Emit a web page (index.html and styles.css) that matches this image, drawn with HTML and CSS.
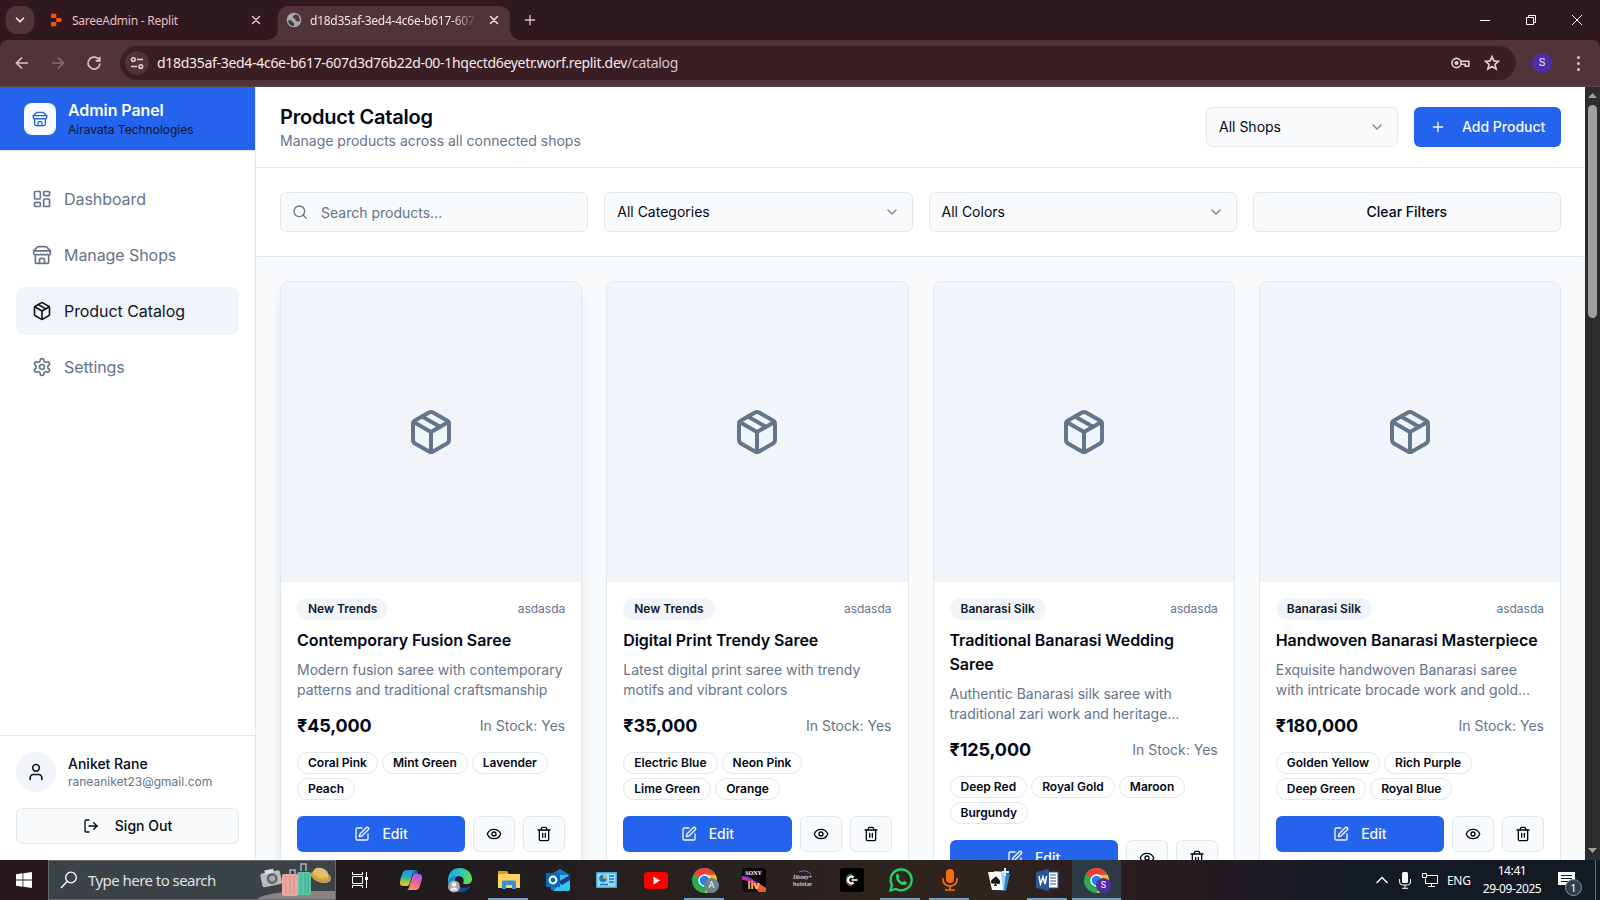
FILE: index.html
```html
<!DOCTYPE html>
<html lang="en">
<head>
<meta charset="utf-8">
<title>Product Catalog</title>
<link rel="stylesheet" href="styles.css">
</head>
<body>
<svg class="defs" aria-hidden="true">
  <linearGradient id="cpa" x1="0" y1="0" x2="0" y2="1"><stop offset="0" stop-color="#1b8fe0"/><stop offset=".45" stop-color="#28b4b0"/><stop offset=".75" stop-color="#a5c93c"/><stop offset="1" stop-color="#f5c623"/></linearGradient>
  <linearGradient id="cpb" x1=".6" y1="0" x2=".3" y2="1"><stop offset="0" stop-color="#a45bea"/><stop offset=".5" stop-color="#e8629a"/><stop offset="1" stop-color="#fb9a52"/></linearGradient>
  <linearGradient id="edg" x1="0" y1="0" x2="1" y2=".3"><stop offset="0" stop-color="#1c9fdc"/><stop offset=".5" stop-color="#2bc3c4"/><stop offset="1" stop-color="#5ddc5b"/></linearGradient>
  <symbol id="chev" viewBox="0 0 24 24"><path d="m6 9 6 6 6-6"/></symbol>
  <symbol id="x" viewBox="0 0 24 24"><path d="M5 5l14 14M19 5L5 19"/></symbol>
  <symbol id="plus" viewBox="0 0 24 24"><path d="M5 12h14M12 5v14"/></symbol>
  <symbol id="store" viewBox="0 0 24 24"><path d="m2 7 4.41-4.41A2 2 0 0 1 7.83 2h8.34a2 2 0 0 1 1.42.59L22 7"/><path d="M4 12v8a2 2 0 0 0 2 2h12a2 2 0 0 0 2-2v-8"/><path d="M15 22v-4a2 2 0 0 0-2-2h-2a2 2 0 0 0-2 2v4"/><path d="M2 7h20"/><path d="M22 7v3a2 2 0 0 1-2 2a2.7 2.7 0 0 1-1.59-.63.7.7 0 0 0-.82 0A2.7 2.7 0 0 1 16 12a2.7 2.7 0 0 1-1.59-.63.7.7 0 0 0-.82 0A2.7 2.7 0 0 1 12 12a2.7 2.7 0 0 1-1.59-.63.7.7 0 0 0-.82 0A2.7 2.7 0 0 1 8 12a2.7 2.7 0 0 1-1.59-.63.7.7 0 0 0-.82 0A2.7 2.7 0 0 1 4 12a2 2 0 0 1-2-2V7"/></symbol>
  <symbol id="dash" viewBox="0 0 24 24"><rect width="7" height="9" x="3" y="3" rx="1"/><rect width="7" height="5" x="14" y="3" rx="1"/><rect width="7" height="9" x="14" y="12" rx="1"/><rect width="7" height="5" x="3" y="16" rx="1"/></symbol>
  <symbol id="box" viewBox="0 0 24 24"><path d="m7.5 4.27 9 5.15"/><path d="M21 8a2 2 0 0 0-1-1.73l-7-4a2 2 0 0 0-2 0l-7 4A2 2 0 0 0 3 8v8a2 2 0 0 0 1 1.73l7 4a2 2 0 0 0 2 0l7-4A2 2 0 0 0 21 16Z"/><path d="m3.3 7 8.7 5 8.7-5"/><path d="M12 22V12"/></symbol>
  <symbol id="gear" viewBox="0 0 24 24"><path d="M12.22 2h-.44a2 2 0 0 0-2 2v.18a2 2 0 0 1-1 1.73l-.43.25a2 2 0 0 1-2 0l-.15-.08a2 2 0 0 0-2.73.73l-.22.38a2 2 0 0 0 .73 2.73l.15.1a2 2 0 0 1 1 1.72v.51a2 2 0 0 1-1 1.74l-.15.09a2 2 0 0 0-.73 2.73l.22.38a2 2 0 0 0 2.73.73l.15-.08a2 2 0 0 1 2 0l.43.25a2 2 0 0 1 1 1.73V20a2 2 0 0 0 2 2h.44a2 2 0 0 0 2-2v-.18a2 2 0 0 1 1-1.73l.43-.25a2 2 0 0 1 2 0l.15.08a2 2 0 0 0 2.73-.73l.22-.39a2 2 0 0 0-.73-2.73l-.15-.08a2 2 0 0 1-1-1.74v-.5a2 2 0 0 1 1-1.74l.15-.09a2 2 0 0 0 .73-2.73l-.22-.38a2 2 0 0 0-2.73-.73l-.15.08a2 2 0 0 1-2 0l-.43-.25a2 2 0 0 1-1-1.73V4a2 2 0 0 0-2-2z"/><circle cx="12" cy="12" r="3"/></symbol>
  <symbol id="user" viewBox="0 0 24 24"><path d="M19 21v-2a4 4 0 0 0-4-4H9a4 4 0 0 0-4 4v2"/><circle cx="12" cy="7" r="4"/></symbol>
  <symbol id="logout" viewBox="0 0 24 24"><path d="M9 21H5a2 2 0 0 1-2-2V5a2 2 0 0 1 2-2h4"/><path d="m16 17 5-5-5-5"/><path d="M21 12H9"/></symbol>
  <symbol id="search" viewBox="0 0 24 24"><circle cx="11" cy="11" r="8"/><path d="m21 21-4.3-4.3"/></symbol>
  <symbol id="pen" viewBox="0 0 24 24"><path d="M12 3H5a2 2 0 0 0-2 2v14a2 2 0 0 0 2 2h14a2 2 0 0 0 2-2v-7"/><path d="M18.375 2.625a1 1 0 0 1 3 3l-9.013 9.014a2 2 0 0 1-.853.505l-2.873.84a.5.5 0 0 1-.62-.62l.84-2.873a2 2 0 0 1 .506-.852z"/></symbol>
  <symbol id="eye" viewBox="0 0 24 24"><path d="M2.062 12.348a1 1 0 0 1 0-.696 10.75 10.75 0 0 1 19.876 0 1 1 0 0 1 0 .696 10.75 10.75 0 0 1-19.876 0"/><circle cx="12" cy="12" r="3"/></symbol>
  <symbol id="trash" viewBox="0 0 24 24"><path d="M3 6h18"/><path d="M19 6v14c0 1-1 2-2 2H7c-1 0-2-1-2-2V6"/><path d="M8 6V4c0-1 1-2 2-2h4c1 0 2 1 2 2v2"/><path d="M10 11v6M14 11v6"/></symbol>
  <symbol id="chrome" viewBox="0 0 24 24"><circle cx="12" cy="12" r="12" fill="#2da94f"/><path d="M12 12 1.6 6A12 12 0 0 1 22.4 6Z" fill="#ea4335"/><path d="M12 6.5H22.6A12 12 0 0 1 12 24l5-9Z" fill="#fbc116"/><circle cx="12" cy="12" r="5.9" fill="#fff"/><circle cx="12" cy="12" r="4.6" fill="#2b7de9"/></symbol>
</svg>

<div class="screen">
  <div class="tabs">
    <div class="tabmenu"><svg class="i s14 w3"><use href="#chev"/></svg></div>
    <div class="tab">
      <svg class="fav" viewBox="0 0 16 16" fill="#fd5402"><rect x="3" y="1.8" width="5.300" height="4.200" rx=".8"/><rect x="8.200" y="5.900" width="5.300" height="4.200" rx=".8"/><rect x="3" y="10" width="5.300" height="4.200" rx=".8"/></svg>
      <span class="tabtext">SareeAdmin - Replit</span>
      <svg class="i s12 w3"><use href="#x"/></svg>
    </div>
    <div class="tab active">
      <svg class="fav" viewBox="0 0 16 16"><circle cx="8" cy="8" r="7.300" fill="#a3a8ad"/><path d="M2.200 8.200c2.300 0 4.300 0 4.300 2.300 1.800 0 1.800 1 1.500 3.500C4.500 14 2 11.500 2.200 8.200ZM9.500 2.200c-.5 1.300-2.500.8-2.500 2.800 0 1.500 1.500 1 2 1.800.8 1.200 0 2 1.500 2.200s1 1 3 .5c1-3-.5-6.500-4-7.300Z" fill="#50343a"/></svg>
      <span class="tabtext fade">d18d35af-3ed4-4c6e-b617-607</span>
      <svg class="i s12 w3"><use href="#x"/></svg>
    </div>
    <svg class="i s16 newtab"><use href="#plus"/></svg>
    <div class="win">
      <svg width="12" height="12"><path d="M1 6.500h10"/></svg>
      <svg width="12" height="12"><path d="M1.500 3.500h7v7h-7zM3.500 3.500v-2h7v7h-2"/></svg>
      <svg width="12" height="12"><path d="M1 1l10 10M11 1L1 11"/></svg>
    </div>
  </div>
  <div class="toolwrap"><div class="toolbar">
    <svg class="nav" viewBox="0 0 16 16"><path d="M14 8H2.500M8 2.500 2.500 8 8 13.500"/></svg>
    <svg class="nav dim" viewBox="0 0 16 16"><path d="M2 8h11.500M8 2.500 13.500 8 8 13.500"/></svg>
    <svg class="nav reload" viewBox="0 0 16 16"><path d="M13.300 5.200A6 6 0 1 0 14 8.500M13.700 1.800v4h-4"/></svg>
    <div class="omni">
      <div class="site"><svg viewBox="0 0 16 16" width="16" height="16"><circle cx="4.300" cy="4.500" r="1.800"/><path d="M8 4.500h6M2 11.500h6"/><circle cx="11.800" cy="11.500" r="1.800"/></svg></div>
      <span class="url">d18d35af-3ed4-4c6e-b617-607d3d76b22d-00-1hqectd6eyetr.worf.replit.dev<span>/catalog</span></span>
      <svg class="key" viewBox="0 0 19 12"><circle cx="5.500" cy="6" r="4.600"/><circle cx="5.500" cy="6" r="1.300" fill="currentColor"/><path d="M9.800 4.200h8v5h-3.600v-2h-4.400"/></svg>
      <svg class="star" viewBox="0 0 16 16"><path d="m8 1.600 1.900 4.300 4.600.4-3.500 3.100 1.100 4.600L8 11.500 3.900 14 5 9.400 1.500 6.300l4.600-.4z"/></svg>
    </div>
    <div class="profile">S</div>
    <div class="dots"><i></i><i></i><i></i></div>
  </div></div>

  <div class="page">
    <aside class="side">
      <div class="brand">
        <div class="logo"><svg class="i s16"><use href="#store"/></svg></div>
        <div><div class="bname">Admin Panel</div><div class="bsub">Airavata Technologies</div></div>
      </div>
      <nav class="menu">
        <a class="item"><svg class="i s20"><use href="#dash"/></svg>Dashboard</a>
        <a class="item"><svg class="i s20"><use href="#store"/></svg>Manage Shops</a>
        <a class="item on"><svg class="i s20"><use href="#box"/></svg>Product Catalog</a>
        <a class="item"><svg class="i s20"><use href="#gear"/></svg>Settings</a>
      </nav>
      <div class="account">
        <div class="who">
          <div class="avatar"><svg class="i s20"><use href="#user"/></svg></div>
          <div><div class="uname">Aniket Rane</div><div class="umail">raneaniket23@gmail.com</div></div>
        </div>
        <div class="btn signout"><svg class="i s16"><use href="#logout"/></svg>Sign Out</div>
      </div>
    </aside>
    <main class="main">
      <header class="head">
        <div><h1>Product Catalog</h1><p>Manage products across all connected shops</p></div>
        <div class="actions">
          <div class="select shops">All Shops<svg class="i s16"><use href="#chev"/></svg></div>
          <div class="add"><svg class="i s16"><use href="#plus"/></svg>Add Product</div>
        </div>
      </header>
      <div class="filters">
        <div class="select find"><svg class="i s16"><use href="#search"/></svg><span>Search products...</span></div>
        <div class="select">All Categories<svg class="i s16"><use href="#chev"/></svg></div>
        <div class="select">All Colors<svg class="i s16"><use href="#chev"/></svg></div>
        <div class="btn clear">Clear Filters</div>
      </div>
      <div class="grid">
        <article class="card hover">
          <div class="pic"><svg class="i s48"><use href="#box"/></svg></div>
          <div class="body">
            <div class="row top"><span class="badge">New Trends</span><span class="shop">asdasda</span></div>
            <h3>Contemporary Fusion Saree</h3>
            <p class="desc">Modern fusion saree with contemporary patterns and traditional craftsmanship</p>
            <div class="row cost"><b>₹45,000</b><span>In Stock: Yes</span></div>
            <div class="chips"><span>Coral Pink</span><span>Mint Green</span><span>Lavender</span><span>Peach</span></div>
            <div class="acts"><div class="edit"><svg class="i s16"><use href="#pen"/></svg>Edit</div><div class="btn sq"><svg class="i s16"><use href="#eye"/></svg></div><div class="btn sq"><svg class="i s16"><use href="#trash"/></svg></div></div>
          </div>
        </article>
        <article class="card">
          <div class="pic"><svg class="i s48"><use href="#box"/></svg></div>
          <div class="body">
            <div class="row top"><span class="badge">New Trends</span><span class="shop">asdasda</span></div>
            <h3>Digital Print Trendy Saree</h3>
            <p class="desc">Latest digital print saree with trendy motifs and vibrant colors</p>
            <div class="row cost"><b>₹35,000</b><span>In Stock: Yes</span></div>
            <div class="chips"><span>Electric Blue</span><span>Neon Pink</span><span>Lime Green</span><span>Orange</span></div>
            <div class="acts"><div class="edit"><svg class="i s16"><use href="#pen"/></svg>Edit</div><div class="btn sq"><svg class="i s16"><use href="#eye"/></svg></div><div class="btn sq"><svg class="i s16"><use href="#trash"/></svg></div></div>
          </div>
        </article>
        <article class="card">
          <div class="pic"><svg class="i s48"><use href="#box"/></svg></div>
          <div class="body">
            <div class="row top"><span class="badge">Banarasi Silk</span><span class="shop">asdasda</span></div>
            <h3>Traditional Banarasi Wedding Saree</h3>
            <p class="desc">Authentic Banarasi silk saree with<br>traditional zari work and heritage…</p>
            <div class="row cost"><b>₹125,000</b><span>In Stock: Yes</span></div>
            <div class="chips"><span>Deep Red</span><span>Royal Gold</span><span>Maroon</span><span>Burgundy</span></div>
            <div class="acts"><div class="edit"><svg class="i s16"><use href="#pen"/></svg>Edit</div><div class="btn sq"><svg class="i s16"><use href="#eye"/></svg></div><div class="btn sq"><svg class="i s16"><use href="#trash"/></svg></div></div>
          </div>
        </article>
        <article class="card">
          <div class="pic"><svg class="i s48"><use href="#box"/></svg></div>
          <div class="body">
            <div class="row top"><span class="badge">Banarasi Silk</span><span class="shop">asdasda</span></div>
            <h3>Handwoven Banarasi Masterpiece</h3>
            <p class="desc">Exquisite handwoven Banarasi saree<br>with intricate brocade work and gold…</p>
            <div class="row cost"><b>₹180,000</b><span>In Stock: Yes</span></div>
            <div class="chips"><span>Golden Yellow</span><span>Rich Purple</span><span>Deep Green</span><span>Royal Blue</span></div>
            <div class="acts"><div class="edit"><svg class="i s16"><use href="#pen"/></svg>Edit</div><div class="btn sq"><svg class="i s16"><use href="#eye"/></svg></div><div class="btn sq"><svg class="i s16"><use href="#trash"/></svg></div></div>
          </div>
        </article>
      </div>
    </main>
    <div class="scroll"><svg width="9" height="5"><path d="M0 5h9L4.500 0z"/></svg><div class="thumb"></div><svg width="9" height="5"><path d="M0 0h9L4.500 5z"/></svg></div>
  </div>

  <div class="taskbar">
    <div class="start"><svg width="16" height="16" fill="#fff"><path d="M0 2.200 6.500 1.300V7.600H0zM7.300 1.200 16 0v7.600H7.300zM0 8.400h6.500v6.300L0 13.800zM7.300 8.400H16V16l-8.700-1.200z"/></svg></div>
    <div class="tsearch">
      <svg width="18" height="18" viewBox="0 0 18 18" fill="none" stroke="#fff" stroke-width="1.300"><circle cx="11" cy="6.500" r="5.300"/><path d="M7 10.500 1 17"/></svg>
      <span>Type here to search</span>
      <svg class="trip" width="78" height="38" viewBox="0 0 78 38">
        <path d="M0 38C14 29 48 30 78 30V38Z" fill="#8b8282"/>
        <g transform="rotate(-12 13 17)"><rect x="4" y="11" width="20" height="14" rx="2" fill="#b9bab9"/><rect x="9" y="8.500" width="9" height="4" fill="#dcdcda"/><circle cx="15" cy="18" r="5.500" fill="#666968"/><circle cx="15" cy="18" r="3" fill="#a6acad"/></g>
        <path d="M33 14V9h5v5M44 10V3h5v7" fill="none" stroke="#aeb2b8" stroke-width="1.500"/>
        <rect x="40" y="11" width="14" height="23" rx="2" fill="#5cc5a5"/><path d="M44 12v20M48 12v20M51 12v20" stroke="#3aa588" stroke-width=".8"/>
        <rect x="25" y="13" width="16" height="22" rx="2" fill="#e9a7a2"/><path d="M29 15v18M33 15v18M37 15v18" stroke="#d08a86" stroke-width=".8"/>
        <ellipse cx="64" cy="15.500" rx="10.500" ry="6" transform="rotate(18 64 15.500)" fill="#c79c57"/><path d="M56 13c0-6 4-7 8-6s8 3 7 9c-5 2-11 1-15-3Z" fill="#e1bd79"/><path d="M56 13c4 4 9 5 15 4" fill="none" stroke="#e7b31c" stroke-width="2"/>
      </svg>
    </div>
    <div class="apps">
      <div class="app first"><svg width="18" height="16" fill="none" stroke="#fff"><path d="M1.500 0v2.500h10V0M1.500 16v-2.500h10V16M1.500 4.500h10v7h-10zM15.500 0v16"/><path d="M14 5h3v3h-3z" fill="#fff" stroke="none"/></svg></div>
      <div class="app"><svg width="24" height="24" viewBox="0 0 24 24"><path d="M14 2h2.500q1.500 0 2 1.500L19.500 7H14Z" fill="#1767be"/><path d="M7.500 2H16q-1.500.5-2.200 3L10.500 16q-.7 2-2.500 2H4C.5 18 .5 14.500 1.500 11l2-6Q4.500 2 7.500 2Z" fill="url(#cpa)"/><path d="M16.500 22H8q1.500-.5 2.200-3L13.500 8q.7-2 2.500-2H20c3.500 0 3.500 3.500 2.500 7l-2 6q-1 3-4 3Z" fill="url(#cpb)"/></svg></div>
      <div class="app"><svg width="26" height="26" viewBox="0 0 26 26"><path d="M1 12C2 4 7 1 13 1c7 0 12 5 12 11 0 5-5 6-9 4.500 2-4 0-7.500-5-7.500C6 9 2 12 1.500 18Q.8 15 1 12Z" fill="url(#edg)"/><path d="M1.300 15C2 11 6 9 11 9c-5 3-4 10 0 13 1 1 3 2.500 5 2.700A12 12 0 0 1 1.300 15Z" fill="#1583d2"/><path d="M9.500 14c0 6 7 8.500 14 5.500-3 4.500-7 5.500-10 5.500-6-2-7-7-4-11Z" fill="#124e96"/><circle cx="7" cy="19.500" r="6" fill="#a8a8a8"/><circle cx="7" cy="17.500" r="2.300" fill="#efefef"/><path d="M3 23.500c1-4 7-4 8 0Z" fill="#efefef"/></svg></div>
      <div class="app open wide"><svg width="22" height="18" viewBox="0 0 22 18"><path d="M0 0h9l2 3H0z" fill="#e2a100"/><path d="M0 3h22v14H0z" fill="#ffd262"/><path d="M4 18v-7q0-1.500 1.500-1.500h11q1.500 0 1.500 1.500v7h-4v-4H8v4z" fill="#3b90d5"/></svg></div>
      <div class="app"><svg width="24" height="24" viewBox="0 0 24 24"><path d="M4 7 14 1l10 6v15H5z" fill="#1476c6"/><path d="M7 7h15v10H7z" fill="#46b8ef"/><path d="M24 8v13q0 2-2 2H7z" fill="#35c5f1"/><path d="m12 14 12-7v5l-8 5z" fill="#123f83"/><rect y="5" width="14" height="14" rx="1" fill="#0a68bd"/><circle cx="7" cy="12" r="3.400" fill="none" stroke="#fff" stroke-width="2"/></svg></div>
      <div class="app"><svg width="21" height="16"><rect width="21" height="16" rx="1" fill="#4aa9dc"/><rect x="1.500" y="1.500" width="18" height="13" fill="#9addf5"/><circle cx="7" cy="6.500" r="3.800" fill="#1f7dbb"/><path d="M7 6.500V2.700a3.800 3.800 0 0 1 3.800 3.800z" fill="#f2b33d"/><path d="M13 4h5M13 7h5M13 10h5M4 12.500h8" stroke="#187bb4" stroke-width="1.500"/></svg></div>
      <div class="app"><svg width="24" height="17"><rect width="24" height="17" rx="4" fill="#f00"/><path d="M9.500 4.500v8l6.500-4z" fill="#fff"/></svg></div>
      <div class="app open"><svg width="25" height="25"><use href="#chrome" width="25" height="25"/></svg><span class="dot gray">A</span></div>
      <div class="app"><div class="sony"><b>SONY</b><svg viewBox="0 0 24 24"><path d="M0 8c10-1 10 5 24 12v4H0Z" fill="#3b42dd"/><path d="M0 9c10 0 12 6 24 12v3H0Z" fill="#d32c83"/><path d="M0 12c8 0 12 5 16 12H0Z" fill="#180820"/><path d="M15 14 24 20v4h-7Z" fill="#f06024"/></svg><i>liv</i></div></div>
      <div class="app"><div class="hot"><svg width="18" height="4" fill="none" stroke="#3b9fae"><path d="M5 2Q12-1 17 4"/></svg><i>Disney+</i><span>hotstar</span></div></div>
      <div class="app"><div class="ctile"><svg width="24" height="24" fill="none"><path d="M13.500 9.500a3.300 3.300 0 1 0 0 5" stroke="#fff" stroke-width="2.400"/><path d="M6.300 11a5.500 5.500 0 0 1 5.200-4.300" stroke="#38a354" stroke-width="1.200"/><path d="M6.300 13a5.500 5.500 0 0 0 5.200 4.300" stroke="#dd5542" stroke-width="1.200"/><path d="M11.500 12h6" stroke="#ccc" stroke-width="2.200"/></svg></div></div>
      <div class="app open"><svg width="24" height="24" viewBox="0 0 24 24"><path d="M1.500 22.500 3 17A10.500 10.500 0 1 1 7 21z" fill="none" stroke="#26d366" stroke-width="2.300"/><path d="M7 8c0-2 2-3 2.800-1.200L10.500 9l-1 1.300c1 2 2.200 3 4.200 3.900l1.300-1.500 2.800 1.500c0 2-1.800 3-3.500 2.800C10 16.500 7 12.500 7 8Z" fill="#26d366"/></svg></div>
      <div class="app open"><svg width="16" height="22" viewBox="0 0 16 22"><rect x="4" width="8" height="14" rx="4" fill="#f96b0b"/><path d="M1 9v2a7 6 0 0 0 14 0V9M8 17v4M3 21h10" fill="none" stroke="#f96b0b" stroke-width="1.700"/></svg></div>
      <div class="app"><svg width="24" height="24" viewBox="0 0 24 24"><path d="m10 3 13 3-4 17-10-1z" fill="#2384cf"/><path d="m7 3 12 1-2 18-8 0z" fill="#9cd5f3"/><path d="m1 4 13 0 2 18-11 0z" fill="#f9fafa"/><path d="M9 8c1 2 5 4 4 7-1 2-3 1-4 0l1 3H7l1-3c-1 1-4 1-4-1 0-3 4-4 5-6Z" fill="#151515"/><path d="M18 0v8M15 4h7" stroke="#dff2ff" stroke-width="2"/></svg></div>
      <div class="app open"><svg width="23" height="22" viewBox="0 0 23 22"><path d="M11 3h11v16H11z" fill="#fff" stroke="#2b579a"/><path d="M14 6h6M14 9h6M14 12h6M14 15h6" stroke="#2b579a"/><path d="m0 3 13-3v22L0 19z" fill="#2b579a"/><path d="m3 7 1.500 8L7 8l2 7 1.600-8" fill="none" stroke="#fff" stroke-width="1.500"/></svg></div>
      <div class="app open current"><svg width="25" height="25"><use href="#chrome" width="25" height="25"/></svg><span class="dot">S</span></div>
    </div>
    <div class="tray">
      <svg width="12" height="8" fill="none" stroke="#fff" stroke-width="1.400"><path d="m.5 7 5.500-5.500L11.500 7"/></svg>
      <svg width="12" height="17" viewBox="0 0 12 17"><rect x="3" width="6" height="11" rx="1.500" fill="#fff"/><path d="M.6 7v3q0 3 3 3h5q3 0 3-3V7M6 13v3M3 16.300h6" fill="none" stroke="#fff"/></svg>
      <svg width="16" height="15" fill="none" stroke="#fff"><path d="M5 2.500h10.500v8H3.500v-5M.5.500h4v4h-4zM9.500 10.500v3M6 13.500h7"/></svg>
      <span class="lang">ENG</span>
      <div class="clock"><span>14:41</span><span>29-09-2025</span></div>
      <div class="note"><svg width="17" height="17"><path d="M0 0h17v13h-5l-4 4v-4H0z" fill="#fff"/><path d="M3 3.500h11M3 6.500h11M3 9.500h7" stroke="#161b22"/></svg><span>1</span></div>
    </div>
  </div>
</div>
</body>
</html>
```
FILE: styles.css
```css
* { box-sizing: border-box; }
body { margin: 0; font-family: Inter, "Liberation Sans", sans-serif; color: #020817; overflow: hidden; }
h1, h3, p { margin: 0; }
svg { flex: none; display: block; }
.defs { position: absolute; width: 0; height: 0; }
.i { fill: none; stroke: currentColor; stroke-width: 2; stroke-linecap: round; stroke-linejoin: round; }
.w3 { stroke-width: 3; }
.s12 { width: 12px; height: 12px; }
.s14 { width: 14px; height: 14px; }
.s16 { width: 16px; height: 16px; }
.s20 { width: 20px; height: 20px; }
.s48 { width: 48px; height: 48px; }
.screen { width: 1600px; height: 900px; display: flex; flex-direction: column; overflow: hidden; }

/* browser chrome */
.tabs { height: 40px; background: #2f191e; display: flex; align-items: flex-end; color: #e5bfc5; font: 12px "Noto Sans", sans-serif; padding-left: 6px; }
.tabmenu { width: 28px; height: 28px; border-radius: 10px; background: #50343a; display: flex; align-items: center; justify-content: center; margin-bottom: 6px; color: #f5e4e6; }
.tab { height: 34px; width: 232px; display: flex; align-items: center; padding: 0 10px 6px 14px; }
.tab:not(.active) { width: 244px; padding-right: 16px; }
.fav { width: 16px; height: 16px; margin-right: 8px; }
.tabtext { flex: 1; white-space: nowrap; letter-spacing: -.25px; }
.tab.active { background: #50343a; border-radius: 10px 10px 0 0; color: #f5e4e6; padding-left: 8px; position: relative; }
.tab.active::before, .tab.active::after { content: ""; position: absolute; bottom: 0; width: 10px; height: 10px; }
.tab.active::before { left: -10px; background: radial-gradient(circle at 0 0, transparent 9.5px, #50343a 10px); }
.tab.active::after { right: -10px; background: radial-gradient(circle at 100% 0, transparent 9.5px, #50343a 10px); }
.tabtext.fade { margin-right: 10px; -webkit-mask-image: linear-gradient(90deg, #000 84%, transparent); mask-image: linear-gradient(90deg, #000 84%, transparent); }
.newtab { margin: 0 0 12px 12px; }
.win { margin: 0 17px 14px auto; display: flex; gap: 34px; }
.win svg { fill: none; stroke: #fff; }
.toolwrap { background: #2f191e; }
.toolbar { height: 47px; background: #50343a; border-bottom: 1px solid #5d4449; border-radius: 8px 8px 0 0; display: flex; align-items: center; padding: 0 17px 0 14px; color: #e5bfc5; }
.nav { width: 16px; height: 16px; margin-right: 20px; fill: none; stroke: #e5bfc5; stroke-width: 1.7; }
.nav.reload { margin-right: 18px; }
.nav.dim { stroke: #8b6b71; }
.omni { height: 34px; flex: none; width: 1396px; border-radius: 17px; background: #391f24; display: flex; align-items: center; padding: 0 16px 0 5px; margin-bottom: 1px; color: #d8c3c6; }
.site { width: 24px; height: 24px; border-radius: 12px; background: #50343a; display: flex; align-items: center; justify-content: center; }
.site svg, .key, .star { fill: none; stroke: #e1d1d3; stroke-width: 1.6; }
.url { font: 14px "Noto Sans", sans-serif; color: #f7e8ea; margin-left: 8px; flex: 1; white-space: nowrap; letter-spacing: -.3px; }
.url span { color: #d9c6c9; }
.key { width: 19px; height: 12px; margin-right: 14px; }
.star { width: 16px; height: 16px; }
.profile { width: 20px; height: 20px; border-radius: 10px; background: #512da8; color: #f0eafc; font: 11px/20px Roboto, sans-serif; text-align: center; margin-left: 16px; }
.dots { margin-left: auto; width: 10px; display: flex; flex-direction: column; gap: 3px; align-items: center; }
.dots i { width: 3px; height: 3px; border-radius: 2px; background: #e5bfc5; }

/* app */
.page { height: 773px; display: flex; overflow: hidden; }
.side { width: 256px; border-right: 1px solid #e2e8f0; background: #fff; display: flex; flex-direction: column; flex: none; }
.brand { height: 64px; background: #2463eb; border-bottom: 1px solid #e2e8f0; display: flex; align-items: center; gap: 12px; padding-left: 24px; flex: none; }
.logo { width: 32px; height: 32px; border-radius: 8px; background: #f8fafc; color: #2463eb; display: flex; align-items: center; justify-content: center; margin-top: 1px; }
.bname { font-size: 16px; font-weight: 600; line-height: 20px; color: #f8fafc; padding-bottom: 2px; letter-spacing: -.08px; }
.bsub { font-size: 12px; line-height: 16px; color: #0f172a; }
.menu { padding: 24px 16px; display: flex; flex-direction: column; gap: 8px; flex: 1; }
.item { height: 48px; border-radius: 8px; display: flex; align-items: center; gap: 12px; padding-left: 16px; font-size: 16px; color: #64748b; letter-spacing: -.07px; }
.item.on { background: #f1f5f9; color: #0f172a; }
.account { border-top: 1px solid #e2e8f0; padding: 16px; }
.who { display: flex; gap: 12px; align-items: center; height: 40px; margin-bottom: 16px; }
.avatar { width: 40px; height: 40px; border-radius: 20px; background: #f1f5f9; color: #0f172a; display: flex; align-items: center; justify-content: center; }
.uname { font-size: 14px; line-height: 20px; font-weight: 500; }
.umail { font-size: 12px; line-height: 16px; color: #64748b; }
.btn { display: flex; align-items: center; justify-content: center; border: 1px solid #e2e8f0; border-radius: 6px; background: #f8fafc; font-size: 14px; line-height: 20px; font-weight: 500; }
.signout { height: 36px; gap: 16px; }
.main { width: 1329px; flex: none; background: #f8fafc; }
.head { height: 81px; background: #fff; border-bottom: 1px solid #e2e8f0; display: flex; justify-content: space-between; align-items: center; padding: 0 24px; }
.head h1 { font-size: 20px; line-height: 28px; font-weight: 600; letter-spacing: -.2px; }
.head p { font-size: 14px; line-height: 20px; color: #64748b; }
.actions { display: flex; gap: 16px; }
.select { height: 40px; border: 1px solid #e2e8f0; border-radius: 6px; background: #f8fafc; padding: 0 12px; display: flex; align-items: center; justify-content: space-between; font-size: 14px; line-height: 20px; }
.select .i { color: #81868f; }
.shops { width: 192px; }
.add { height: 40px; width: 147px; border-radius: 6px; background: #2463eb; color: #f8fafc; display: flex; align-items: center; gap: 16px; padding-left: 16px; font-size: 14px; line-height: 20px; font-weight: 500; white-space: nowrap; }
.filters { height: 89px; background: #fff; border-bottom: 1px solid #e2e8f0; padding: 24px; display: grid; grid-template-columns: repeat(4, 1fr); gap: 16px; }
.clear { height: 40px; }
.find { justify-content: flex-start; gap: 13px; padding-left: 11px; color: #64748b; }
.find .i { color: #64748b; }
.find span { padding-top: 2px; }
.grid { padding: 24px; display: grid; grid-template-columns: repeat(4, 1fr); gap: 24px; align-items: start; }
.card { background: #fff; border: 1px solid #e2e8f0; border-radius: 8px; overflow: hidden; min-width: 0; height: 620px; }
.hover { box-shadow: 0 10px 15px -3px #0000001a, 0 4px 6px -4px #0000001a; }
.pic { aspect-ratio: 1; background: #f1f5f9; color: #64748b; display: flex; align-items: center; justify-content: center; }
.body { padding: 16px; }
.row { display: flex; justify-content: space-between; align-items: center; }
.top { height: 22px; margin-bottom: 8px; }
.badge { font-size: 12px; line-height: 22px; height: 22px; font-weight: 600; background: #f1f5f9; color: #0f172a; border-radius: 11px; padding: 0 11px; }
.shop { font-size: 12px; line-height: 16px; color: #64748b; }
.card h3 { font-size: 16px; line-height: 24px; font-weight: 600; margin-bottom: 8px; letter-spacing: -.06px; }
.desc { font-size: 14px; line-height: 20px; color: #64748b; margin-bottom: 12px; }
.cost { height: 28px; margin-bottom: 12px; }
.cost b { font-size: 18px; line-height: 28px; font-weight: 700; letter-spacing: -.12px; }
.cost span { font-size: 14px; line-height: 20px; color: #64748b; }
.chips { display: flex; flex-wrap: wrap; gap: 4px; margin-bottom: 16px; }
.chips span { height: 22px; line-height: 20px; border: 1px solid #e2e8f0; border-radius: 11px; padding: 0 10px; font-size: 12px; font-weight: 600; }
.acts { display: flex; gap: 8px; height: 36px; }
.edit { flex: 1; border-radius: 6px; background: #2463eb; color: #f8fafc; display: flex; align-items: center; justify-content: center; gap: 12px; font-size: 14px; line-height: 20px; font-weight: 500; }
.sq { width: 42px; }
.scroll { width: 15px; background: #2c2c2c; display: flex; flex-direction: column; align-items: center; padding: 6px 0 7px; }
.scroll svg { fill: #9f9f9f; }
.thumb { width: 9px; height: 213px; border-radius: 5px; background: #9f9f9f; margin: 7px 0 auto; }

/* taskbar */
.taskbar { height: 40px; display: flex; background: linear-gradient(90deg, #26171b, #1f1b1e 25%, #28221f 45%, #30241f 62%, #271b1e 72%, #151b24 84%, #121a24); font-family: "Noto Sans", sans-serif; color: #fff; }
.start { width: 48px; display: flex; align-items: center; justify-content: center; }
.tsearch { width: 288px; background: #3b4347; border: 1px solid #666b6d; display: flex; align-items: center; padding-left: 11px; font-size: 15px; color: #e0e1e1; overflow: hidden; }
.tsearch span { margin-left: 10px; white-space: nowrap; letter-spacing: -.55px; }
.trip { margin-left: auto; }
.apps { display: flex; }
.app { width: 49px; display: flex; align-items: center; justify-content: center; position: relative; }
.app.first { width: 50px; padding-right: 2px; }
.open::after { content: ""; position: absolute; left: 4px; right: 5px; bottom: 0; height: 2px; background: #76a0be; }
.current { background: #2d3b45; }
.current::after { left: 0; right: 0; }
.dot { position: absolute; left: 24px; top: 18px; width: 15px; height: 15px; border-radius: 8px; background: #512da8; font: 9px/15px Roboto, sans-serif; text-align: center; }
.gray { background: #6d8591; }
.sony { width: 24px; height: 24px; border-radius: 2px; background: #07050d; position: relative; overflow: hidden; }
.sony b { position: absolute; z-index: 1; left: 0; width: 24px; top: 1px; text-align: center; font: bold 6px/8px "Liberation Serif", serif; }
.sony i { position: absolute; left: 6px; top: 11px; font: bold 11px/13px "Liberation Sans", sans-serif; color: #ffd52c; }
.hot { display: flex; flex-direction: column; align-items: center; font: bold 6px/7px Lato, sans-serif; color: #cfcdcd; margin-bottom: 3px; }
.hot i { font: italic bold 6px/6px "Liberation Serif", serif; letter-spacing: -.2px; }
.ctile { width: 24px; height: 24px; border-radius: 3px; background: #000; }
.tray { margin-left: auto; display: flex; align-items: center; }
.tray > svg { margin-right: 11px; }
.lang { font-size: 12px; margin-left: -2px; width: 24px; letter-spacing: -.3px; }
.clock { width: 70px; margin-left: 6px; display: flex; flex-direction: column; align-items: center; font-size: 12px; line-height: 18px; letter-spacing: -.4px; }
.note { width: 44px; height: 40px; margin-left: 5px; padding: 12px 0 0 12px; position: relative; border-right: 1px solid #65696f; margin-right: 4px; }
.note svg { margin-left: -6px; }
.note span { position: absolute; left: 13px; top: 19px; width: 17px; height: 17px; border-radius: 9px; border: 1px solid #8b969c; background: #2d3f49; font-size: 11px; line-height: 15px; text-align: center; }
```
